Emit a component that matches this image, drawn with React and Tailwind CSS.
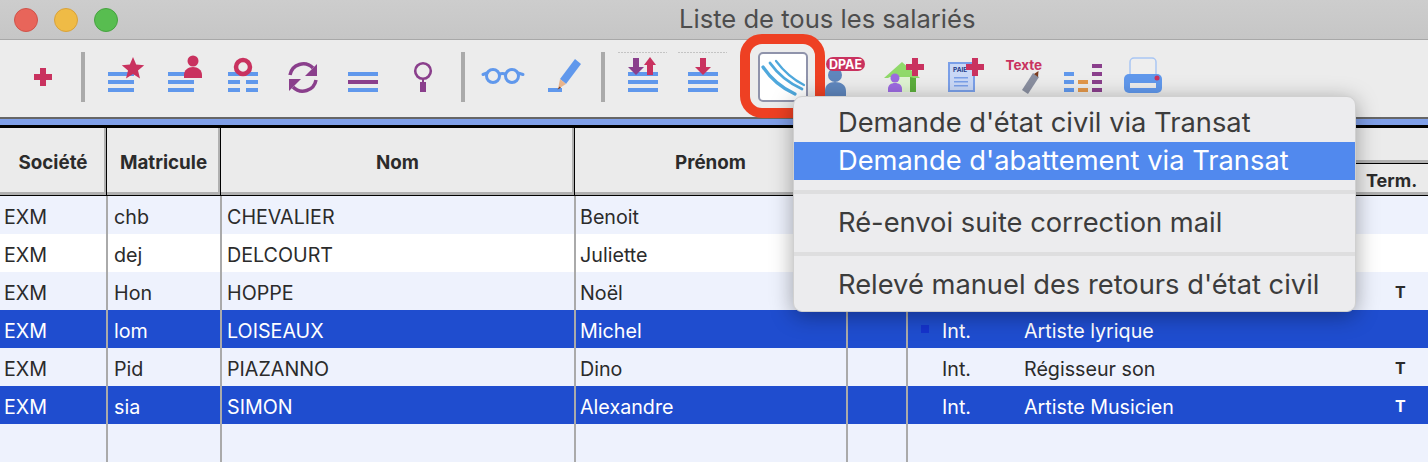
import React from "react";

const CRIMSON = "#c9325f";
const BLUE = "#6098ec";
const PURPLE = "#8a3f8c";

// svg cell, drawn in page coordinates so icons are easy to compare with the screenshot
const Cell = ({ x, children, wide }) => (
  <svg
    viewBox={`${x} 40 ${wide ? 90 : 60} 78`}
    className={`${wide ? "w-[90px]" : "w-[60px]"} h-[78px] shrink-0 overflow-visible`}
  >
    {children}
  </svg>
);

const Sep = ({ className }) => (
  <div className={`w-1 h-[50px] mt-3 shrink-0 bg-[#aaaaaa] ${className}`} />
);

const Lines = ({ x, w = 30, mid = BLUE }) => (
  <>
    <rect x={x} y="72" width={w} height="4" fill={BLUE} />
    <rect x={x} y="80" width={w} height="4" fill={mid} />
    <rect x={x} y="88" width={w} height="4" fill={BLUE} />
  </>
);

const Plus = ({ cx, cy }) => (
  <path
    d={`M${cx - 3} ${cy - 9}h6v6h6v6h-6v6h-6v-6h-6v-6h6z`}
    fill={CRIMSON}
  />
);

const Arrow = ({ cx, y, up, color }) =>
  up ? (
    <path d={`M${cx} ${y}l6 8h-3v10h-6v-10h-3z`} fill={color} />
  ) : (
    <path d={`M${cx - 3} ${y}h6v9h5l-8 8l-8-8h5z`} fill={color} />
  );

const Dotted = ({ x, w }) => (
  <line x1={x} x2={x + w} y1="52.5" y2="52.5" stroke="#c4c4c4" strokeWidth="1" strokeDasharray="2 1" />
);

const Toolbar = () => (
  <div className="flex h-[78px] pl-[13px] bg-[#ececec]">
    <Cell x={13}>
      <Plus cx={43} cy={77} />
    </Cell>
    <Sep className="ml-2" />
    <div className="w-[11px] shrink-0" />
    <Cell x={96}>
      <Lines x={108} w={26} />
      <path d="M133 57l3.2 7.6 8 .6-6.2 5.2 2 8-7-4.3-7 4.3 2-8-6.2-5.2 8-.6z" fill={CRIMSON} />
    </Cell>
    <Cell x={156}>
      <Lines x={168} w={26} />
      <circle cx="193" cy="61" r="5.5" fill={CRIMSON} />
      <path d="M184 78v-3c0-5 4-8 9-8s9 3 9 8v3z" fill={CRIMSON} />
    </Cell>
    <Cell x={216}>
      <rect x="228" y="72" width="30" height="4" fill={BLUE} />
      <rect x="228" y="80" width="12" height="4" fill={BLUE} />
      <rect x="246" y="80" width="12" height="4" fill={BLUE} />
      <rect x="228" y="88" width="12" height="4" fill={BLUE} />
      <rect x="246" y="88" width="12" height="4" fill={BLUE} />
      <circle cx="243" cy="67" r="7" fill="#ececec" stroke={CRIMSON} strokeWidth="4.5" />
    </Cell>
    <Cell x={276}>
      <path d="M290 75a13.5 13.5 0 0 1 23-7" fill="none" stroke={PURPLE} strokeWidth="3.5" />
      <path d="M316 80a13.5 13.5 0 0 1-23 7" fill="none" stroke={PURPLE} strokeWidth="3.5" />
      <path d="M317 64v12h-12z" fill={PURPLE} />
      <path d="M289 91v-12h12z" fill={PURPLE} />
    </Cell>
    <Cell x={336}>
      <Lines x={348} mid={PURPLE} />
    </Cell>
    <Cell x={396}>
      <circle cx="423" cy="71" r="7.8" fill="none" stroke={PURPLE} strokeWidth="2.6" />
      <rect x="422" y="78" width="2" height="4" fill={PURPLE} />
      <rect x="420" y="82" width="6" height="10" fill={PURPLE} />
    </Cell>
    <Sep className="ml-[5px]" />
    <div className="w-2 shrink-0" />
    <Cell x={473}>
      <g fill="none" stroke={BLUE} strokeWidth="3">
        <circle cx="493" cy="76" r="6.5" />
        <circle cx="512" cy="76" r="6.5" />
        <path d="M499 74.5q3.500-2 7 0" />
        <path d="M487 73l-4 1.5" strokeLinecap="round" />
        <path d="M518 73l5 1.5" strokeLinecap="round" />
      </g>
    </Cell>
    <Cell x={533}>
      <rect x="548" y="88" width="14" height="4" fill={BLUE} />
      <path d="M575 59l6 5-15 20-6-5z" fill={BLUE} />
      <path d="M560 79l6 5-8 5z" fill="#e8b48c" />
      <path d="M559.500 86.500l-2 3 3.500-1.800z" fill="#7a3b1e" />
    </Cell>
    <Sep className="ml-2" />
    <div className="w-[11px] shrink-0" />
    <Cell x={616}>
      <Dotted x={618} w={49} />
      <Lines x={628} />
      <Arrow cx={636} y={58} color={PURPLE} />
      <Arrow cx={650} y={57} up color={CRIMSON} />
    </Cell>
    <Cell x={676}>
      <Dotted x={678} w={49} />
      <Lines x={688} />
      <Arrow cx={703} y={58} color={CRIMSON} />
    </Cell>
    <Cell x={736} wide>
      <rect x="759" y="53" width="48" height="48" rx="4" fill="#ffffff" stroke="#8f93ab" strokeWidth="2" />
      <g fill="none" stroke="#4fa8dc" strokeLinecap="round">
        <path d="M763 67q12 18 32 27" strokeWidth="3.200" />
        <path d="M770 63q12 17 32 26" strokeWidth="2.800" />
        <path d="M776 61q12 16 28 24" strokeWidth="2.200" />
      </g>
    </Cell>
    <Cell x={826}>
      <circle cx="835" cy="75" r="7" fill="#5f86bd" />
      <path d="M825 97v-6c0-6 4-9 10-9s11 3 11 9v6z" fill="#5f86bd" />
      <rect x="826" y="57" width="39" height="14" rx="7" fill={CRIMSON} />
      <text x="845.500" y="68.500" textAnchor="middle" fontSize="12.500" fontWeight="700" fill="#ffffff" fontFamily="Inter, sans-serif">DPAE</text>
    </Cell>
    <Cell x={886}>
      <rect x="890" y="74" width="26" height="18" fill="#dff3d2" />
      <rect x="910" y="76" width="6" height="16" fill="#5cae3c" />
      <path d="M884 78l18-16 18 16h-6l-4-1h-20l-2 1z" fill="#90d96a" />
      <circle cx="895" cy="78" r="4.500" fill="#9c6ae0" />
      <path d="M888 92v-3c0-4 3-6 7-6s7 2 7 6v3z" fill="#9c6ae0" />
      <Plus cx={915} cy={67} />
    </Cell>
    <Cell x={946}>
      <rect x="949" y="63" width="25" height="28" fill="#c9d8f6" stroke="#7a9fe8" strokeWidth="2" />
      <text x="953" y="72" fontSize="6.500" fontWeight="700" fill="#1f3c88" fontFamily="Inter, sans-serif">PAIE</text>
      <rect x="954" y="77" width="14" height="1.500" fill="#7a9fe8" />
      <rect x="954" y="81" width="14" height="1.500" fill="#7a9fe8" />
      <rect x="954" y="85" width="14" height="1.500" fill="#7a9fe8" />
      <Plus cx={975} cy={67} />
    </Cell>
    <Cell x={1006}>
      <text x="1005.500" y="70" fontSize="13.500" fontWeight="700" fill={CRIMSON} fontFamily="Inter, sans-serif">Texte</text>
      <path d="M1033 73l6 4-11 17-6-4z" fill="#8a8fa0" />
      <path d="M1034 74l4 3 .5-6z" fill="#7a3b1e" />
    </Cell>
    <Cell x={1066}>
      {[72, 80, 88].map((y) => (
        <rect key={y} x="1064" y={y} width="10" height="4" fill={BLUE} />
      ))}
      {[80, 88].map((y) => (
        <rect key={y} x="1078" y={y} width="10" height="4" fill="#e2974a" />
      ))}
      {[64, 72, 80, 88].map((y) => (
        <rect key={y} x="1092" y={y} width="10" height="4" fill={PURPLE} />
      ))}
    </Cell>
    <Cell x={1126}>
      <rect x="1130" y="58" width="26" height="20" rx="4" fill="#eeeeee" stroke="#a9c6f3" strokeWidth="1.500" />
      <rect x="1124" y="74" width="38" height="19" rx="5" fill={BLUE} />
      <rect x="1130" y="83" width="26" height="5" fill="#ececec" />
      <circle cx="1157" cy="78" r="2.500" fill={CRIMSON} />
    </Cell>
  </div>
);

const rows = [
  { soc: "EXM", mat: "chb", nom: "CHEVALIER", prenom: "Benoit" },
  { soc: "EXM", mat: "dej", nom: "DELCOURT", prenom: "Juliette" },
  { soc: "EXM", mat: "Hon", nom: "HOPPE", prenom: "Noël", term: "T" },
  { soc: "EXM", mat: "lom", nom: "LOISEAUX", prenom: "Michel", type: "Int.", fn: "Artiste lyrique", selected: true, dot: true },
  { soc: "EXM", mat: "Pid", nom: "PIAZANNO", prenom: "Dino", type: "Int.", fn: "Régisseur son", term: "T" },
  { soc: "EXM", mat: "sia", nom: "SIMON", prenom: "Alexandre", type: "Int.", fn: "Artiste Musicien", term: "T", selected: true },
  {},
];

const HeadCell = ({ className, children }) => (
  <div
    className={`flex items-center justify-center h-full shrink-0 pt-1 border-r border-black bg-[#ebebeb] shadow-[inset_-2px_-3px_0_#b0b0b0] font-bold text-[18.800px] text-[#2b2b2b] ${className}`}
  >
    {children}
  </div>
);

const Row = ({ row, index }) => {
  const bg = row.selected
    ? "bg-[#1f4dcf] text-white"
    : index === 1
    ? "bg-white text-[#2b2b2b]"
    : "bg-[#eef2fd] text-[#2b2b2b]";
  const cell = "h-full shrink-0 border-r-2 border-[#aaaaaa] leading-[42px]";
  return (
    <div className={`flex h-[38px] text-[19.700px] ${bg}`}>
      <div className={`${cell} w-[108px] pl-1`}>{row.soc}</div>
      <div className={`${cell} w-[114px] pl-[6px]`}>{row.mat}</div>
      <div className={`${cell} w-[354px] pl-[5px]`}>{row.nom}</div>
      <div className={`${cell} w-[272px] pl-1`}>{row.prenom}</div>
      <div className={`${cell} w-[60px]`} />
      <div className="w-[34px] h-full shrink-0 flex items-center pl-[13px]">
        {row.dot && <div className="w-2 h-2 bg-[#1533cc]" />}
      </div>
      <div className="w-[82px] leading-[42px]">{row.type}</div>
      <div className="w-[336px] leading-[42px]">{row.fn}</div>
      <div className="flex-1 leading-[40px] text-[16px] font-bold pl-[35px]">{row.term}</div>
    </div>
  );
};

const Menu = () => (
  <div className="absolute left-[793px] top-[96px] w-[563px] h-[216px] pt-[7px] rounded-[9px] bg-[#ececee] text-[27.300px] text-[#3c3c3c] shadow-[0_4px_22px_rgba(0,0,0,0.35)] border border-[#d0d0d0]">
    <div className="h-[38px] leading-[38px] pl-[44px]">Demande d'état civil via Transat</div>
    <div className="h-[38px] leading-[38px] pl-[44px] bg-[#5189ee] text-white">Demande d'abattement via Transat</div>
    <div className="h-1 mt-[10px] bg-[#dededf]" />
    <div className="h-[58px] leading-[58px] pl-[44px]">Ré-envoi suite correction mail</div>
    <div className="h-1 bg-[#dededf]" />
    <div className="h-[58px] leading-[58px] pl-[44px]">Relevé manuel des retours d'état civil</div>
  </div>
);

export default function App() {
  return (
    <div className="relative w-[1428px] h-[462px] overflow-hidden bg-[#eef2fd] font-['Inter',sans-serif]">
      {/* title bar */}
      <div className="flex items-center h-[40px] pl-[14px] gap-4 border-b border-[#a8a8a8] bg-gradient-to-b from-[#cdcdcd] to-[#c6c6c6]">
        <div className="w-6 h-6 rounded-full bg-[#e8655a] border border-[#d0534a]" />
        <div className="w-6 h-6 rounded-full bg-[#efbb46] border border-[#d9a23a]" />
        <div className="w-6 h-6 rounded-full bg-[#58bd50] border border-[#46a340]" />
        <div className="ml-[545px] text-[25.600px] text-[#4d4d4d]">Liste de tous les salariés</div>
      </div>

      <Toolbar />

      <div className="h-[2px] -mt-[1px] bg-[#666666]" />
      <div className="h-[6px] bg-[#7f9fe8]" />
      <div className="h-[3px] bg-black" />

      {/* table head */}
      <div className="flex h-[68px] border-b border-black">
        <HeadCell className="w-[107px]">Société</HeadCell>
        <HeadCell className="w-[114px]">Matricule</HeadCell>
        <HeadCell className="w-[354px]">Nom</HeadCell>
        <HeadCell className="w-[272px]">Prénom</HeadCell>
        <HeadCell className="w-[60px]" />
        <div className="flex flex-col flex-1 h-full bg-[#ebebeb]">
          <div className="h-[35px] border-b-[3px] border-[#b0b0b0] shrink-0" />
          <div className="h-[1px] bg-black shrink-0" />
          <div className="flex flex-1 shadow-[inset_0_-3px_0_#b0b0b0]">
            <div className="flex-1" />
            <div className="w-[72px] pt-[3px] pl-[10px] font-bold text-[18px] text-[#2b2b2b]">Term.</div>
          </div>
        </div>
      </div>

      {rows.map((row, index) => (
        <Row key={index} row={row} index={index} />
      ))}

      {/* highlight drawn over the toolbar */}
      <div className="absolute left-[740px] top-[34px] w-[85px] h-[84px] rounded-[22px] border-[10px] border-[#ee4023]" />

      <Menu />
    </div>
  );
}
